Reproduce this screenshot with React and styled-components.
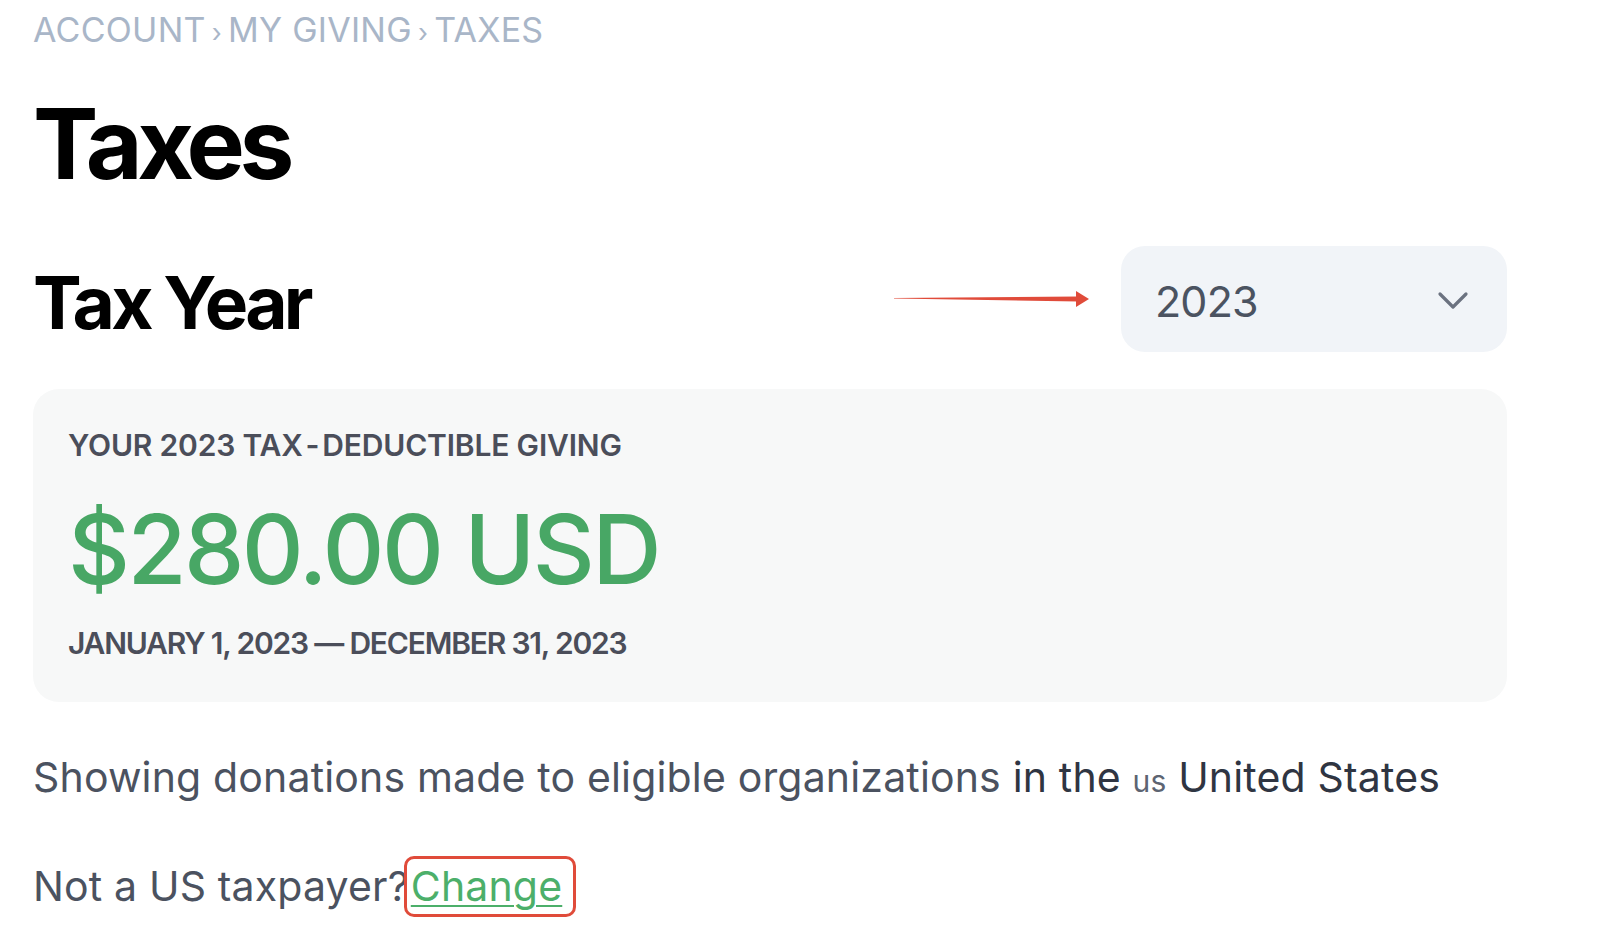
import React from 'react';
import styled, {createGlobalStyle} from 'styled-components';

const GlobalStyle = createGlobalStyle`
  body {
    margin: 0;
    background: #fff;
    font-family: Inter, "Liberation Sans", sans-serif;
  }
`;

const Page = styled.div`
  width: 1474px;
  padding: 10px 0 40px 33px;
`;

const Crumbs = styled.nav`
  display: flex;
  align-items: baseline;
  font-size: 34px;
  line-height: 40px;
  color: #a9b6c8;
  letter-spacing: 0.008em;
`;

const Sep = styled.span`
  font-size: 26px;
  margin: 0 6px;
`;

const Title = styled.h1`
  margin: 42px 0 0;
  font-size: 98px;
  line-height: 98px;
  font-weight: 700;
  letter-spacing: -0.056em;
  color: #000;
`;

const YearRow = styled.div`
  margin-top: 53px;
  display: flex;
  align-items: center;
  justify-content: space-between;
`;

const SubTitle = styled.h2`
  margin: 0;
  padding-top: 6px;
  font-size: 73px;
  line-height: 73px;
  font-weight: 700;
  letter-spacing: -0.052em;
  color: #000;
`;

const Picker = styled.div`
  display: flex;
  align-items: center;
`;

const Arrow = styled.svg`
  width: 196px;
  height: 20px;
  margin-right: 31px;
`;

const Select = styled.div`
  box-sizing: border-box;
  width: 386px;
  height: 106px;
  padding: 4px 38px 0 34px;
  display: flex;
  align-items: center;
  justify-content: space-between;
  background: #f1f4f8;
  border-radius: 24px;
  font-size: 43px;
  line-height: 43px;
  color: #4b5361;
  letter-spacing: -0.02em;
`;

const Card = styled.section`
  margin-top: 37px;
  padding: 38px 35px 41px;
  background: #f7f8f8;
  border-radius: 26px;
`;

const Caps = styled.div`
  font-size: 30px;
  line-height: 36px;
  font-weight: 600;
  color: #4b4e5a;
  letter-spacing: ${p => p.spacing}em;
  margin-top: ${p => p.gap || 0}px;
`;

const Dash = styled.span`
  margin: 0 3px;
`;

const Amount = styled.div`
  margin-top: 38px;
  font-size: 96px;
  line-height: 96px;
  font-weight: 500;
  color: #48a765;
  letter-spacing: -0.027em;
`;

const Note = styled.p`
  margin: ${p => p.gap}px 0 0;
  font-size: 41px;
  line-height: 48px;
  color: #4b5260;
  letter-spacing: 0.004em;
`;

const Dark = styled.span`
  color: #2f3542;
`;

const Code = styled.span`
  font-size: 30px;
  color: #5d6472;
`;

const ChangeLink = styled.a`
  position: relative;
  color: #4caf6a;
  text-decoration: underline;
  text-decoration-thickness: 2px;
  text-underline-offset: 4px;
  margin-left: 2px;
  cursor: pointer;

  &::after {
    content: '';
    position: absolute;
    left: -7px;
    right: -14px;
    top: -5px;
    bottom: -6px;
    border: 3px solid #e04b3a;
    border-radius: 10px;
  }
`;

const Chevron = () => (
  <svg width="32" height="20" viewBox="0 0 32 20" fill="none">
    <path d="M3 3l13 13 13-13" stroke="#6b7280" strokeWidth="3.2" strokeLinecap="round" strokeLinejoin="round"/>
  </svg>
);

const App = () => {
  return (
    <>
      <GlobalStyle/>
      <Page>
        <Crumbs>
          ACCOUNT<Sep>›</Sep>MY GIVING<Sep>›</Sep>TAXES
        </Crumbs>
        <Title>Taxes</Title>
        <YearRow>
          <SubTitle>Tax Year</SubTitle>
          <Picker>
            <Arrow viewBox="0 0 196 20">
              <polygon points="0,9 184,7.6 184,12.4 0,9.6" fill="#e04b3a"/>
              <polygon points="182,2 195,10 182,18" fill="#e04b3a"/>
            </Arrow>
            <Select>
              2023
              <Chevron/>
            </Select>
          </Picker>
        </YearRow>
        <Card>
          <Caps spacing={-0.006}>YOUR 2023 TAX<Dash>-</Dash>DEDUCTIBLE GIVING</Caps>
          <Amount>$280.00 USD</Amount>
          <Caps gap={28} spacing={-0.04}>JANUARY 1, 2023 — DECEMBER 31, 2023</Caps>
        </Card>
        <Note gap={51}>
          Showing donations made to eligible organizations <Dark>in the</Dark> <Code>us</Code> <Dark>United States</Dark>
        </Note>
        <Note gap={57}>
          Not a US taxpayer?<ChangeLink>Change</ChangeLink>
        </Note>
      </Page>
    </>
  );
};

export default App;
